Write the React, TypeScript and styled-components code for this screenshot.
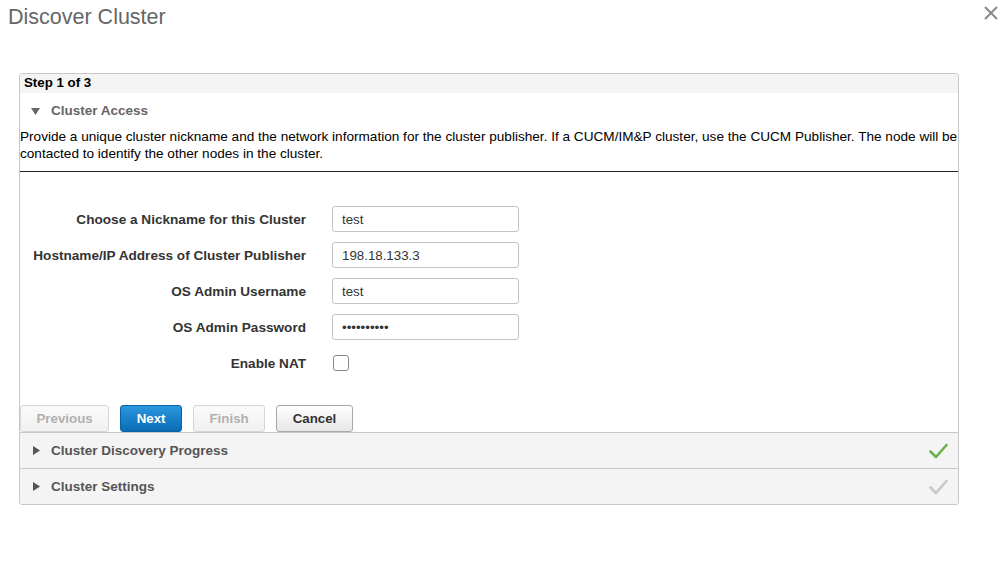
import React from "react";
import styled, { createGlobalStyle } from "styled-components";

const Global = createGlobalStyle`
  html, body { margin: 0; padding: 0; background: #fff; }
  body { font-family: "Liberation Sans", Arial, sans-serif; color: #333; }
  * { box-sizing: border-box; }
`;

const Page = styled.div`
  width: 999px;
  height: 575px;
  display: flex;
  flex-direction: column;
  overflow: hidden;
`;

const Header = styled.div`
  display: flex;
  justify-content: space-between;
  align-items: flex-start;
  height: 73px;
  padding: 4px 0 0 8px;
`;

const Title = styled.h1`
  margin: 0;
  font-size: 21.5px;
  font-weight: normal;
  color: #666;
  line-height: 26px;
`;

const Close = styled.button`
  border: 0;
  background: none;
  padding: 0;
  margin: 1px 0 0 0;
  width: 16px;
  height: 16px;
  display: flex;
  cursor: pointer;
`;

const Panel = styled.div`
  margin-left: 19px;
  width: 940px;
  border: 1px solid #c8c8c8;
  border-radius: 3px;
  overflow: hidden;
`;

const StepBar = styled.div`
  height: 19px;
  background: #f4f4f4;
  padding-left: 4px;
  font-size: 13.3px;
  font-weight: bold;
  color: #000;
  line-height: 17px;
`;

const SectionHead = styled.div`
  height: 35px;
  display: flex;
  align-items: center;
  padding-left: 11px;
  gap: 11px;
  font-size: 13.5px;
  font-weight: bold;
  color: #666;
`;

const Description = styled.p`
  margin: 0;
  padding: 0 0 9px 0;
  font-size: 13.6px;
  line-height: 17px;
  color: #000;
  border-bottom: 1px solid #222;
`;

const Form = styled.div`
  display: flex;
  flex-direction: column;
  gap: 10px;
  padding-top: 34px;
`;

const Row = styled.div`
  display: grid;
  grid-template-columns: 286px 187px;
  column-gap: 26px;
  align-items: center;
  height: 26px;
`;

const Label = styled.label`
  text-align: right;
  font-size: 13.6px;
  font-weight: bold;
  color: #333;
`;

const Input = styled.input`
  height: 26px;
  width: 187px;
  border: 1px solid #c4c4c4;
  border-radius: 3px;
  padding: 0 9px;
  font-family: "Liberation Sans", Arial, sans-serif;
  font-size: 13.3px;
  color: #333;
  outline: none;
`;

const Checkbox = styled.span`
  display: block;
  width: 16px;
  height: 16px;
  margin-left: 1px;
  border: 1px solid #8a8a8a;
  border-radius: 3px;
  background: #fff;
`;

const Buttons = styled.div`
  display: flex;
  gap: 11px;
  padding: 29px 0 0 0;
  height: 56px;
`;

const Btn = styled.button<{ $variant?: "primary" | "disabled" | "default" }>`
  height: 27px;
  padding: 0 15.5px;
  border-radius: 3px;
  font-family: "Liberation Sans", Arial, sans-serif;
  font-size: 13.3px;
  font-weight: bold;
  cursor: pointer;
  ${(p) =>
    p.$variant === "primary"
      ? `background: linear-gradient(#2a97dd, #0a6cb6); color: #fff; border: 1px solid #0a63a6;`
      : p.$variant === "disabled"
      ? `background: linear-gradient(#fafafa, #f1f1f1); color: #b0b0b0; border: 1px solid #d6d6d6;`
      : `background: linear-gradient(#ffffff, #e6e6e6); color: #333; border: 1px solid #a8a8a8;`}
`;

const AccordionRow = styled.div`
  height: 36px;
  background: #f4f4f4;
  border-top: 1px solid #c8c8c8;
  display: flex;
  align-items: center;
  padding: 0 10px 0 12px;
  gap: 11px;
  font-size: 13.5px;
  font-weight: bold;
  color: #555;
`;

const AccLabel = styled.span`
  flex: 1;
`;

const Down = () => (
  <svg width="9" height="8" viewBox="0 0 9 8">
    <polygon points="0,1 9,1 4.5,8" fill="#666" />
  </svg>
);

const Right = () => (
  <svg width="8" height="9" viewBox="0 0 8 9">
    <polygon points="1,0 8,4.5 1,9" fill="#555" />
  </svg>
);

const Check = ({ color }: { color: string }) => (
  <svg width="19" height="16" viewBox="0 0 19 16">
    <path d="M1.5 8.5 L7 14 L17.5 2" fill="none" stroke={color} strokeWidth="2.6" strokeLinecap="round" strokeLinejoin="round" />
  </svg>
);

export default function App() {
  return (
    <Page>
      <Global />
      <Header>
        <Title>Discover Cluster</Title>
        <Close aria-label="Close">
          <svg width="16" height="16" viewBox="0 0 16 16">
            <path d="M2 2 L14 14 M14 2 L2 14" stroke="#8a8a8a" strokeWidth="2" />
          </svg>
        </Close>
      </Header>
      <Panel>
        <StepBar>Step 1 of 3</StepBar>
        <SectionHead>
          <Down />
          Cluster Access
        </SectionHead>
        <Description>
          Provide a unique cluster nickname and the network information for the cluster publisher. If a CUCM/IM&amp;P cluster, use the CUCM Publisher. The node will be contacted to identify the other nodes in the cluster.
        </Description>
        <Form>
          <Row>
            <Label>Choose a Nickname for this Cluster</Label>
            <Input defaultValue="test" />
          </Row>
          <Row>
            <Label>Hostname/IP Address of Cluster Publisher</Label>
            <Input defaultValue="198.18.133.3" />
          </Row>
          <Row>
            <Label>OS Admin Username</Label>
            <Input defaultValue="test" />
          </Row>
          <Row>
            <Label>OS Admin Password</Label>
            <Input type="password" defaultValue="1234567890" />
          </Row>
          <Row>
            <Label>Enable NAT</Label>
            <Checkbox />
          </Row>
        </Form>
        <Buttons>
          <Btn $variant="disabled">Previous</Btn>
          <Btn $variant="primary">Next</Btn>
          <Btn $variant="disabled">Finish</Btn>
          <Btn $variant="default">Cancel</Btn>
        </Buttons>
        <AccordionRow>
          <Right />
          <AccLabel>Cluster Discovery Progress</AccLabel>
          <Check color="#6ab04c" />
        </AccordionRow>
        <AccordionRow>
          <Right />
          <AccLabel>Cluster Settings</AccLabel>
          <Check color="#c8c8c8" />
        </AccordionRow>
      </Panel>
    </Page>
  );
}
